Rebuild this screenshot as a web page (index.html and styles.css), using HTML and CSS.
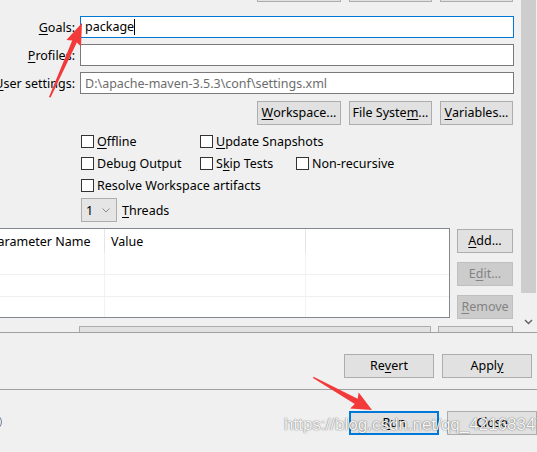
FILE: index.html
```html
<!DOCTYPE html>
<html>
<head>
<meta charset="utf-8">
<link rel="stylesheet" href="styles.css">
</head>
<body>
<div class="scroller">
  <div class="viewport">
    <div class="content">
      <div class="btnrow top-row">
        <span class="btn w84">&nbsp;</span>
        <span class="btn w83">&nbsp;</span>
        <span class="btn w73">&nbsp;</span>
      </div>
      <div class="form">
        <label class="lbl"><u>G</u>oals:</label>
        <div class="field active"><span class="caret">package</span></div>
        <label class="lbl"><u>P</u>rofiles:</label>
        <div class="field"></div>
        <label class="lbl"><u>U</u>ser settings:</label>
        <div class="field gray">D:\apache-maven-3.5.3\conf\settings.xml</div>
      </div>
      <div class="btnrow mid-row">
        <span class="btn w84"><u>W</u>orkspace...</span>
        <span class="btn w83">File Syste<u>m</u>...</span>
        <span class="btn w73"><u>V</u>ariables...</span>
      </div>
      <div class="checks">
        <div class="chk"><span class="box"></span><span><u>O</u>ffline</span></div>
        <div class="chk"><span class="box"></span><span><u>U</u>pdate Snapshots</span></div>
        <div class="chk"></div>
        <div class="chk"><span class="box"></span><span>Debu<u>g</u> Output</span></div>
        <div class="chk"><span class="box"></span><span>S<u>k</u>ip Tests</span></div>
        <div class="chk"><span class="box"></span><span>Non-recursive</span></div>
        <div class="chk wide"><span class="box"></span><span>Resolve Workspace artifacts</span></div>
      </div>
      <div class="threads">
        <div class="combo"><span>1</span>
          <svg width="8" height="5" viewBox="0 0 8 5"><polyline points="0.5,0.5 4,4 7.5,0.5" fill="none" stroke="#8a8a8a" stroke-width="1"/></svg>
        </div>
        <span><u>T</u>hreads</span>
      </div>
      <div class="params">
        <div class="table">
          <div class="trow head">
            <div class="c1">Parameter Name</div><div class="c2">Value</div><div class="c3"></div>
          </div>
          <div class="trow"><div class="c1"></div><div class="c2"></div><div class="c3"></div></div>
          <div class="trow"><div class="c1"></div><div class="c2"></div><div class="c3"></div></div>
          <div class="trow last"><div class="c1"></div><div class="c2"></div><div class="c3"></div></div>
        </div>
        <div class="side">
          <span class="btn sb"><u>A</u>dd...</span>
          <span class="btn sb dis">E<u>d</u>it...</span>
          <span class="btn sb dis"><u>R</u>emove</span>
        </div>
      </div>
      <div class="btnrow bottom-row">
        <span class="btn wbig">&nbsp;</span>
        <span class="btn w75">&nbsp;</span>
      </div>
    </div>
  </div>
  <div class="vscroll">
    <div class="thumb"></div>
    <div class="arrow">
      <svg width="9" height="6" viewBox="0 0 9 6"><polyline points="1,1 4.5,4.5 8,1" fill="none" stroke="#606060" stroke-width="1.4"/></svg>
    </div>
  </div>
</div>
<div class="footer">
  <div class="frow r1">
    <span class="btn fb">Re<u>v</u>ert</span>
    <span class="btn fb">Appl<u>y</u></span>
  </div>
  <div class="frow r2">
    <span class="help"></span>
    <span class="btn fb default"><u>R</u>un</span>
    <span class="btn fb">Close</span>
  </div>
</div>
<svg class="annot" width="537" height="452" viewBox="0 0 537 452">
  <polygon fill="#f23a3a" points="49,97 72.2,40.4 66.4,39.9 82,23 81,46.5 76.8,42.4 50.6,97.6"/>
  <polygon fill="#f23a3a" points="313,378 354.8,404 350.1,408.4 372,410 358.7,392.6 357.6,398.8 313.5,376.8"/>
</svg>
<div class="watermark">https://blog.csdn.net/qq_42168347</div>
</body>
</html>
```
FILE: styles.css
```css
html, body { margin: 0; padding: 0; }
body {
  width: 537px;
  height: 452px;
  overflow: hidden;
  background: #f0f0f0;
  font-family: "Noto Sans", "Segoe UI", sans-serif;
  font-size: 12.5px;
  color: #000;
  position: relative;
}
u { text-decoration: underline; text-underline-offset: 2px; }

.scroller {
  display: flex;
  height: 332px;
  border-bottom: 1px solid #a0a0a0;
}
.viewport { flex: 1; overflow: hidden; }
.content {
  margin-left: -14px;
  width: calc(100% + 14px);
  margin-top: -22px;
}
.vscroll {
  width: 16px;
  display: flex;
  flex-direction: column;
  align-items: flex-start;
}
.thumb { width: 15px; height: 293px; background: #cdcdcd; }
.arrow { width: 15px; display: flex; justify-content: center; margin-top: 26px; }

.btn {
  box-sizing: border-box;
  height: 24px;
  background: #e1e1e1;
  border: 1px solid #adadad;
  display: flex;
  align-items: center;
  justify-content: center;
  line-height: 1;
  white-space: nowrap;
}
.btnrow { display: flex; justify-content: flex-end; gap: 8px; padding-right: 8px; }
.w84 { width: 84px; }
.w83 { width: 83px; }
.w73 { width: 73px; }
.mid-row { margin-top: 7px; }

.form {
  display: grid;
  grid-template-columns: 89px 1fr;
  column-gap: 5px;
  row-gap: 6px;
  margin-top: 14px;
  padding-right: 7px;
}
.lbl {
  display: flex;
  align-items: center;
  justify-content: flex-end;
  white-space: nowrap;
  height: 22px;
}
.field {
  box-sizing: border-box;
  height: 22px;
  background: #fff;
  border: 1px solid #7a7a7a;
  padding-left: 4px;
  display: flex;
  align-items: center;
  white-space: nowrap;
}
.field.active { border-color: #0078d7; }
.field.gray { color: #6d6d6d; }
.caret { border-right: 1px solid #000; line-height: 16px; }

.checks {
  display: grid;
  grid-template-columns: 119px 96px auto;
  margin-top: 5px;
  padding-left: 95px;
}
.chk { display: flex; align-items: center; height: 22px; gap: 3px; white-space: nowrap; }
.chk.wide { grid-column: 1 / 4; }
.box {
  box-sizing: border-box;
  width: 13px;
  height: 13px;
  background: #fff;
  border: 1px solid #333;
  flex: none;
}

.threads {
  display: flex;
  align-items: center;
  gap: 5px;
  margin-top: 2px;
  padding-left: 95px;
}
.combo {
  box-sizing: border-box;
  width: 36px;
  height: 24px;
  background: #e5e5e5;
  border: 1px solid #adadad;
  display: flex;
  align-items: center;
  justify-content: space-between;
  padding: 0 6px 0 4px;
}

.params {
  display: flex;
  gap: 7px;
  margin-top: 6px;
  padding-right: 8px;
}
.table {
  box-sizing: border-box;
  width: 464px;
  height: 90px;
  background: #fff;
  border: 1px solid #828790;
  overflow: hidden;
}
.trow { display: flex; height: 21px; border-bottom: 1px solid #f0f0f0; }
.trow.head { height: 24px; border-bottom: none; }
.trow.last { border-bottom: none; }
.trow > div { box-sizing: border-box; display: flex; align-items: center; white-space: nowrap; }
.c1 { width: 118px; padding-left: 3px; border-right: 1px solid #eef2fa; }
.c2 { width: 201px; padding-left: 6px; border-right: 1px solid #eef2fa; }
.c3 { flex: 1; }
.head .c1, .head .c2 { border-right-color: #e5e5e5; }
.side { display: flex; flex-direction: column; gap: 9px; padding-top: 1px; }
.sb { width: 56px; }
.dis { background: #cccccc; border-color: #bfbfbf; color: #838383; }

.bottom-row { margin-top: 7px; gap: 7px; }
.wbig { width: 352px; }
.w75 { width: 75px; }

.footer { display: flex; flex-direction: column; }
.frow { display: flex; justify-content: flex-end; }
.r1 { padding: 21px 5px 11px 0; gap: 8px; border-bottom: 1px solid #a0a0a0; }
.r2 { padding-top: 21px; gap: 8px; }
.fb { width: 90px; }
.default { border: 2px solid #0078d7; }
.help {
  margin-right: auto;
  margin-left: -14px;
  width: 16px;
  height: 16px;
  box-sizing: border-box;
  border: 1px solid #6f7f9f;
  border-radius: 50%;
  align-self: center;
  margin-top: -2px;
}

.annot { position: absolute; left: 0; top: 0; pointer-events: none; }
.watermark {
  position: absolute;
  left: 284px;
  top: 415px;
  font-family: "Liberation Sans", Arial, sans-serif;
  font-size: 17px;
  color: rgba(255, 255, 255, 0.95);
  text-shadow: 0 0 1px rgba(0, 0, 0, 0.55), 0 0 2px rgba(0, 0, 0, 0.25);
  white-space: nowrap;
}
```
